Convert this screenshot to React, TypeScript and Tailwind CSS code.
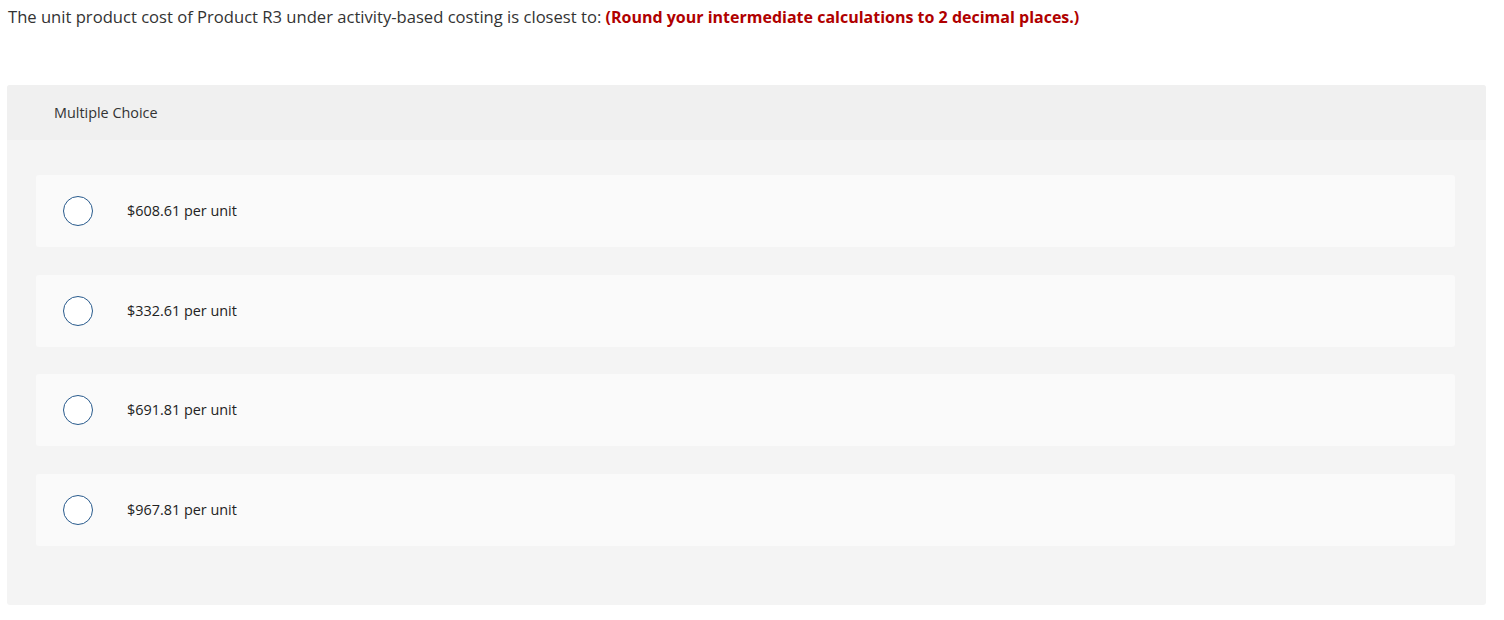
import React from "react";

const choices = [
  "$608.61 per unit",
  "$332.61 per unit",
  "$691.81 per unit",
  "$967.81 per unit",
];

export default function App() {
  return (
    <div className="min-h-screen bg-white font-['Open_Sans',Arial,sans-serif] text-[#222]">
      {/* question */}
      <p className="px-[8px] pt-[7px] text-[16.6px] leading-[20px] text-[#333]">
        The unit product cost of Product R3 under activity-based costing is closest to:{" "}
        <strong className="text-[16px] font-bold text-[#b00000]">
          (Round your intermediate calculations to 2 decimal places.)
        </strong>
      </p>

      {/* answer panel */}
      <div className="mt-[58px] ml-[7px] mr-[18px] overflow-hidden rounded-[3px] bg-[#f4f4f4]">
        <div className="flex h-[55px] items-center bg-[#f0f0f0] pl-[47px] text-[14.4px] text-[#333]">
          Multiple Choice
        </div>
        <ul className="flex flex-col gap-[27.5px] pt-[35px] pb-[59px] pl-[29px] pr-[31px]">
          {choices.map((c) => (
            <li
              key={c}
              className="flex h-[72px] items-center rounded-[3px] bg-[#fafafa] pl-[27px]"
            >
              <span className="h-[30px] w-[30px] shrink-0 rounded-full border-[1.5px] border-[#285a8c] bg-white" />
              <span className="ml-[34px] text-[14.4px] text-[#222]">{c}</span>
            </li>
          ))}
        </ul>
      </div>
    </div>
  );
}
